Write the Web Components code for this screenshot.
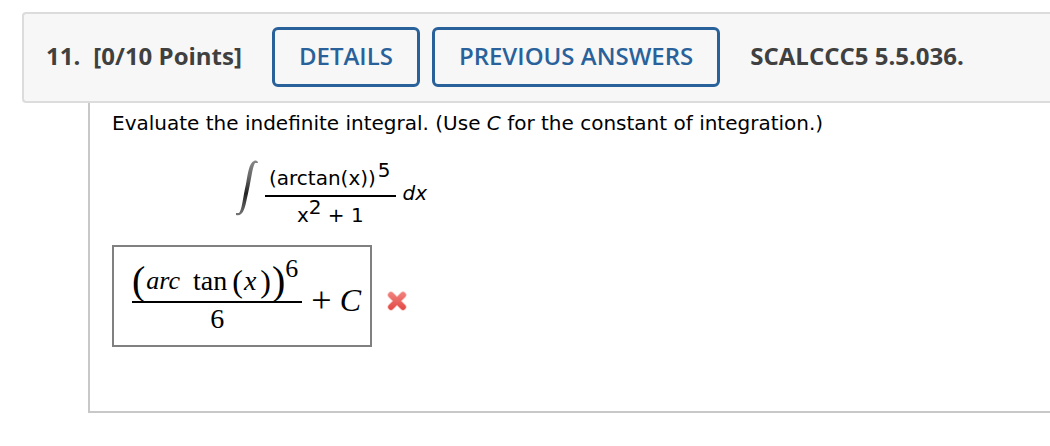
<!DOCTYPE html>
<html lang="en">
<head>
<meta charset="utf-8">
<title>Question 11</title>
<style>
body { margin: 0; background: #fff; overflow-x: hidden; }
</style>
</head>
<body>
<question-card>
  <question-header slot="header" number="11." points="[0/10 Points]" code="SCALCCC5 5.5.036.">
    <outline-button>DETAILS</outline-button>
    <outline-button>PREVIOUS ANSWERS</outline-button>
  </question-header>
  <question-prompt>Evaluate the indefinite integral. (Use <i>C</i> for the constant of integration.)</question-prompt>
  <integral-formula></integral-formula>
  <answer-box></answer-box>
</question-card>

<script>
class BaseElement extends HTMLElement {
  constructor() {
    super();
    this.attachShadow({ mode: "open" }).innerHTML = this.constructor.markup;
  }
}

customElements.define("question-card", class extends BaseElement {
  static markup = `
    <style>
      :host { display: block; padding: 12px 0 32px 22px; }
      .body {
        margin-left: 66px; padding: 8px 0 64px 22px;
        border: 2px solid #c8c8c8; border-width: 0 0 2px 2px;
        display: flex; flex-direction: column; align-items: flex-start;
      }
    </style>
    <slot name="header"></slot>
    <section class="body"><slot></slot></section>`;
});

customElements.define("question-header", class extends BaseElement {
  static markup = `
    <style>
      :host {
        display: flex; align-items: center; box-sizing: border-box;
        padding: 13px 22px 14px; background: #f7f7f7;
        border: 2px solid #dcdcdc; border-right: 0; border-radius: 4px 0 0 4px;
        font: bold 24px/32px "Open Sans", sans-serif; color: #404040; white-space: nowrap;
      }
      span { padding-bottom: 2px; }
      .points { margin-left: 13px; }
      .actions { display: flex; gap: 12px; margin: 0 30px; }
    </style>
    <span class="number"></span>
    <span class="points"></span>
    <div class="actions"><slot></slot></div>
    <span class="code"></span>`;
  connectedCallback() {
    for (const name of ["number", "points", "code"])
      this.shadowRoot.querySelector("." + name).textContent = this.getAttribute(name);
  }
});

customElements.define("outline-button", class extends BaseElement {
  static markup = `
    <style>
      :host { display: block; }
      button {
        display: block; margin: 0; padding: 10px 24px 12px; background: #f7f7f7;
        border: 3px solid #29629a; border-radius: 6px; color: #29629a;
        font: 600 24px/32px "Open Sans", sans-serif; white-space: nowrap;
      }
    </style>
    <button type="button"><slot></slot></button>`;
});

customElements.define("question-prompt", class extends BaseElement {
  static markup = `
    <style>
      :host { display: block; font: 20px/24px Verdana, "DejaVu Sans", sans-serif; color: #000; }
    </style>
    <slot></slot>`;
});

customElements.define("integral-formula", class extends BaseElement {
  static markup = `
    <style>
      :host {
        display: flex; align-items: center; margin: 23px 0 0 124px;
        font: 20px/24px Verdana, "DejaVu Sans", sans-serif; color: #000; white-space: nowrap;
      }
      svg { margin-bottom: 10px; }
      .fraction { display: flex; flex-direction: column; align-items: center; margin: 0 7px 0 4px; }
      .row { display: flex; align-items: flex-end; }
      .top { border-bottom: 2px solid #000; padding: 0 5px 5px 4px; }
      .top .sup { margin-left: 2px; }
      .bottom { margin-top: -2px; }
      .row span { display: block; }
      .sup { padding-bottom: 8px; }
    </style>
    <svg width="25" height="58" viewBox="0 0 25 58" role="img" aria-label="integral">
      <defs>
        <linearGradient id="ink" x1="0" y1="0" x2="0" y2="1">
          <stop offset="0" stop-color="#888"/><stop offset=".3" stop-color="#666"/>
          <stop offset=".6" stop-color="#222"/><stop offset="1" stop-color="#777"/>
        </linearGradient>
      </defs>
      <path fill="url(#ink)" d="M22 4C22 2 20 1 18 2C13 4 12 14 10 25C7 38 6 51 3 54L0 54L0 56C7 58 9 49 11 39C15 23 16 9 19 4Z"/>
    </svg>
    <div class="fraction">
      <div class="row top"><span>(arctan(x))</span><span class="sup">5</span></div>
      <div class="row bottom"><span>x</span><span class="sup">2</span><span>&nbsp;+ 1</span></div>
    </div>
    <i>dx</i>`;
});

customElements.define("answer-box", class extends BaseElement {
  static markup = `
    <style>
      :host {
        display: flex; align-items: center; gap: 14px; margin-top: 18px;
        font: 28px/32px "Liberation Serif", serif; color: #000; white-space: nowrap;
      }
      .box {
        display: flex; align-items: center; box-sizing: border-box;
        padding: 6px 8px 6px 18px; border: 2px solid #808080; width: 260px; min-height: 102px;
      }
      .fraction { display: flex; flex-direction: column; align-items: center; margin-bottom: 4px; }
      .top { display: flex; align-items: flex-end; border-bottom: 2px solid #000; padding: 0 4px 4px 0; }
      .top span, .top i { display: block; }
      .big { font-size: 40px; }
      .arc { font-size: 26px; margin-left: 1px; }
      .tan { margin: 0 5px 0 13px; }
      .paren { font-size: 32px; }
      .x { margin: 0 4px 0 1px; }
      .x ~ .big { margin-left: 1px; }
      .sup { font-size: 26px; padding-bottom: 12px; }
      .rest { display: flex; gap: 8px; margin: 8px 0 0 9px; font-size: 32px; }
      .plus { font-size: 36px; }
      svg { margin-top: 10px; }
    </style>
    <div class="box">
      <div class="fraction">
        <div class="top"><span class="big">(</span><i class="arc">arc</i><span class="tan">tan</span><span class="paren">(</span><i class="x">x</i><span class="paren">)</span><span class="big">)</span><span class="sup">6</span></div>
        <span>6</span>
      </div>
      <div class="rest"><span class="plus">+</span><i>C</i></div>
    </div>
    <svg width="22" height="22" viewBox="0 0 22 22" role="img" aria-label="Incorrect">
      <defs>
        <linearGradient id="red" gradientUnits="userSpaceOnUse" x1="0" y1="0" x2="0" y2="22">
          <stop offset="0" stop-color="#f38a84"/><stop offset="1" stop-color="#e0413f"/>
        </linearGradient>
      </defs>
      <path d="M5 5L17 17M17 5L5 17" stroke="#f9c5c2" stroke-width="7" stroke-linecap="round"/>
      <path d="M5 5L17 17M17 5L5 17" stroke="url(#red)" stroke-width="5.5" stroke-linecap="round"/>
    </svg>`;
});
</script>
</body>
</html>
